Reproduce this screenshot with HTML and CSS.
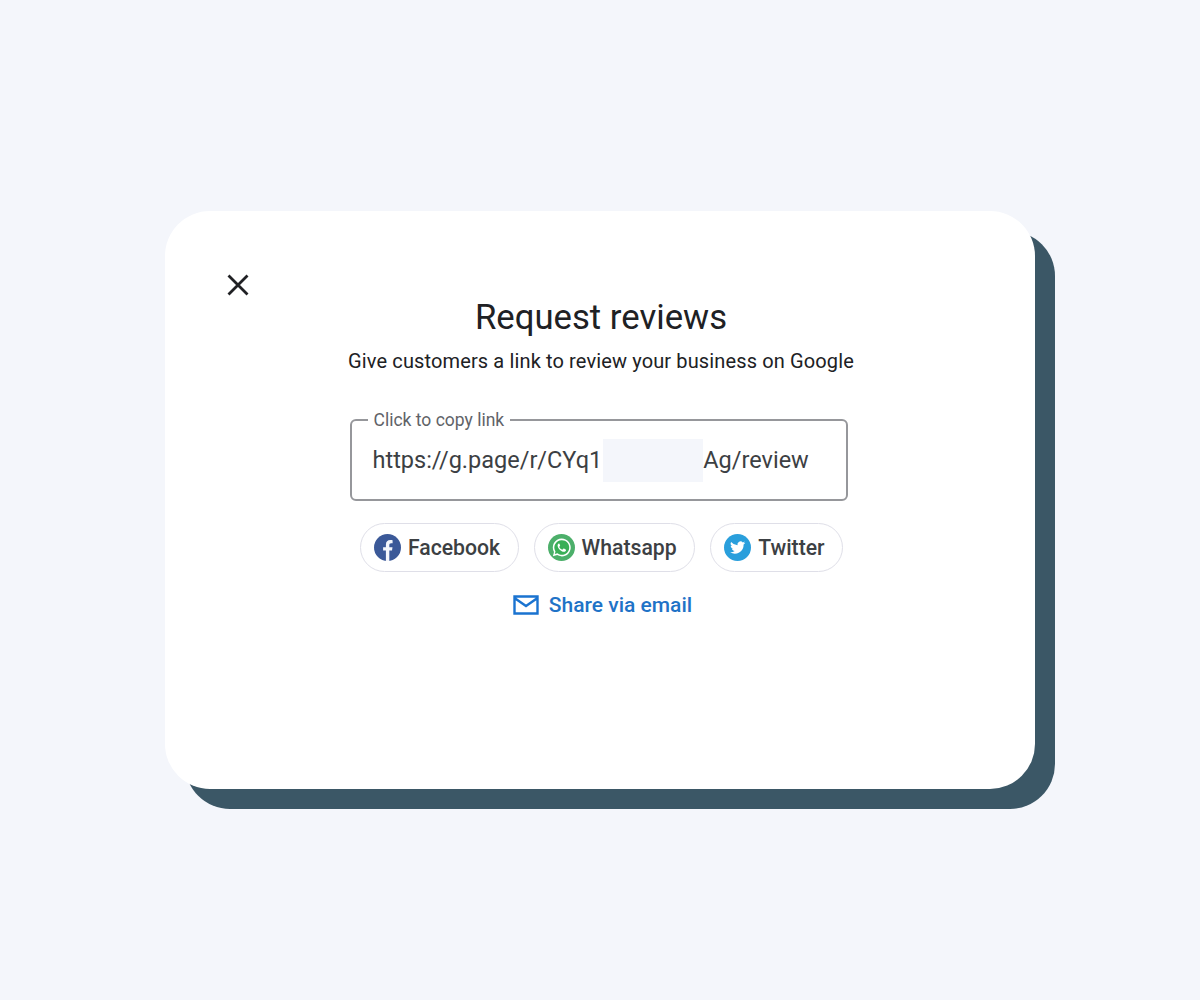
FILE: index.html
```html
<!DOCTYPE html>
<html lang="en">
  <head>
    <meta charset="UTF-8" />
    <title>Request reviews</title>
    <link rel="stylesheet" href="styles.css">
  </head>
  <body>
    <div class="card">
      <button class="close-button" aria-label="Close">
        <svg width="24" height="24" viewBox="0 0 24 24"><path d="M2.5 2.5L21.5 21.5M21.5 2.5L2.5 21.5" fill="none" stroke="#202124" stroke-width="2.8"/></svg>
      </button>

      <div class="content">
        <h1>Request reviews</h1>
        <p class="subtitle">Give customers a link to review your business on Google</p>

        <fieldset class="link-box">
          <legend>Click to copy link</legend>
          <div class="link-text">
            <span>https://g.page/r/CYq1</span>
            <span class="redacted"></span>
            <span>Ag/review</span>
          </div>
        </fieldset>

        <div class="share-buttons">
          <a class="chip chip-facebook">
            <svg width="27" height="27" viewBox="0 0 27 27"><circle cx="13.5" cy="13.5" r="13.5" fill="#3b5998"/><path d="M11.900 27V16.600H9.100v-3.400h2.800v-2.500c0-3 1.700-4.600 4.400-4.600 1.200 0 2.300.2 2.300.2v2.900h-1.400c-1.500 0-1.900.9-1.900 1.800v2.200h3.200l-.5 3.400h-2.700V27z" fill="#f4f6fb"/></svg>
            Facebook
          </a>
          <a class="chip chip-whatsapp">
            <svg width="27" height="27" viewBox="0 0 27 27"><circle cx="13.5" cy="13.5" r="13.5" fill="#4caf6a"/><path d="M13.6 4.6a8.9 8.9 0 0 0-7.6 13.400L4.900 22.200l4.300-1.100a8.900 8.900 0 1 0 4.400-16.500z" fill="#fff"/><path d="M13.600 6.200a7.300 7.300 0 0 0-6.100 11.200l-.7 2.600 2.700-.7a7.300 7.300 0 1 0 4.100-13.100z" fill="#3aaf57"/><path d="M10.900 9.500c-.5 0-1.300.7-1.300 2 0 2.800 3.600 6.300 6.300 6.300 1.300 0 2.100-.9 2.100-1.600 0-.5-.1-.7-.3-.8l-1.700-.8c-.3-.1-.5 0-.7.200l-.6.700c-.2.200-.4.200-.7.100-1-.4-2.100-1.400-2.600-2.400-.1-.3-.1-.5.100-.7l.5-.6c.1-.2.200-.4.100-.6l-.7-1.500c-.1-.2-.3-.3-.5-.3z" fill="#fff"/></svg>
            Whatsapp
          </a>
          <a class="chip chip-twitter">
            <svg width="27" height="27" viewBox="0 0 27 27"><circle cx="13.5" cy="13.5" r="13.5" fill="#2a9fdc"/><path d="M21.200 8.800c-.6.300-1.200.4-1.800.5.700-.4 1.100-1 1.400-1.700-.6.400-1.300.6-2 .8a3.100 3.100 0 0 0-5.300 2.800 8.800 8.800 0 0 1-6.400-3.200 3.100 3.100 0 0 0 1 4.100c-.5 0-1-.2-1.400-.4 0 1.500 1.100 2.800 2.500 3.100-.5.100-.9.100-1.400 0 .4 1.200 1.500 2.100 2.900 2.100a6.200 6.200 0 0 1-4.600 1.300 8.800 8.800 0 0 0 13.500-7.800c.6-.5 1.200-1 1.600-1.700z" fill="#fff"/></svg>
            Twitter
          </a>
        </div>

        <a class="email-link">
          <svg width="26" height="20" viewBox="0 0 26 20"><path d="M1.500 1.500h23v17h-23zM1.500 3l11.500 8 11.500-8" fill="none" stroke="#1a73d0" stroke-width="2.400"/></svg>
          Share via email
        </a>
      </div>
    </div>
  </body>
</html>
```

FILE: styles.css
```css
body {
  font-family: Roboto, 'Liberation Sans', sans-serif;
  margin: 0;
  padding: 0;
  height: 100vh;
  display: flex;
  align-items: center;
  justify-content: center;
  background-color: #f4f6fb;
}

.card {
  position: relative;
  box-sizing: border-box;
  width: 870px;
  height: 578px;
  padding-top: 86px;
  background-color: white;
  border-radius: 45px;
  box-shadow: 20px 20px 0 #3b5766;
}

.close-button {
  position: absolute;
  top: 62px;
  left: 61px;
  width: 24px;
  height: 24px;
  padding: 0;
  background: none;
  border: none;
  cursor: pointer;
}

.content {
  display: flex;
  flex-direction: column;
  align-items: center;
  padding-left: 2px;
}

h1 {
  margin: 0;
  font-size: 34.7px;
  font-weight: 400;
  line-height: 40px;
  color: #202124;
}

.subtitle {
  margin: 11px 0 0;
  font-size: 20px;
  letter-spacing: 0.13px;
  line-height: 26px;
  color: #202124;
}

/* リンク欄 */
.link-box {
  box-sizing: border-box;
  width: 498px;
  height: 91px;
  margin: 36px 5px 0 0;
  padding: 0 0 0 21px;
  border: 2px solid #96979b;
  border-radius: 6px;
}

.link-box legend {
  padding: 0 6px;
  margin-left: -5px;
  font-size: 17.5px;
  line-height: 20px;
  color: #5f6368;
}

.link-text {
  display: flex;
  align-items: center;
  height: 44px;
  margin-top: 8px;
  font-size: 23.5px;
  color: #3c4043;
}

.redacted {
  width: 100px;
  height: 43px;
  margin-left: 1px;
  background-color: #f4f6fb;
}

/* 共有ボタン */
.share-buttons {
  display: flex;
  gap: 15px;
  margin-top: 22px;
  margin-left: 1px;
}

.chip {
  box-sizing: border-box;
  display: flex;
  align-items: center;
  gap: 7px;
  height: 49px;
  padding: 0 17.5px 0 13px;
  border: 1.5px solid #dfdfe8;
  border-radius: 25px;
  font-size: 21.2px;
  font-weight: 500;
  color: #3c4043;
}

.email-link {
  display: flex;
  align-items: center;
  gap: 10px;
  margin-top: 20px;
  margin-left: 3px;
  font-size: 21px;
  font-weight: 500;
  line-height: 26px;
  color: #1f73c7;
}
```
